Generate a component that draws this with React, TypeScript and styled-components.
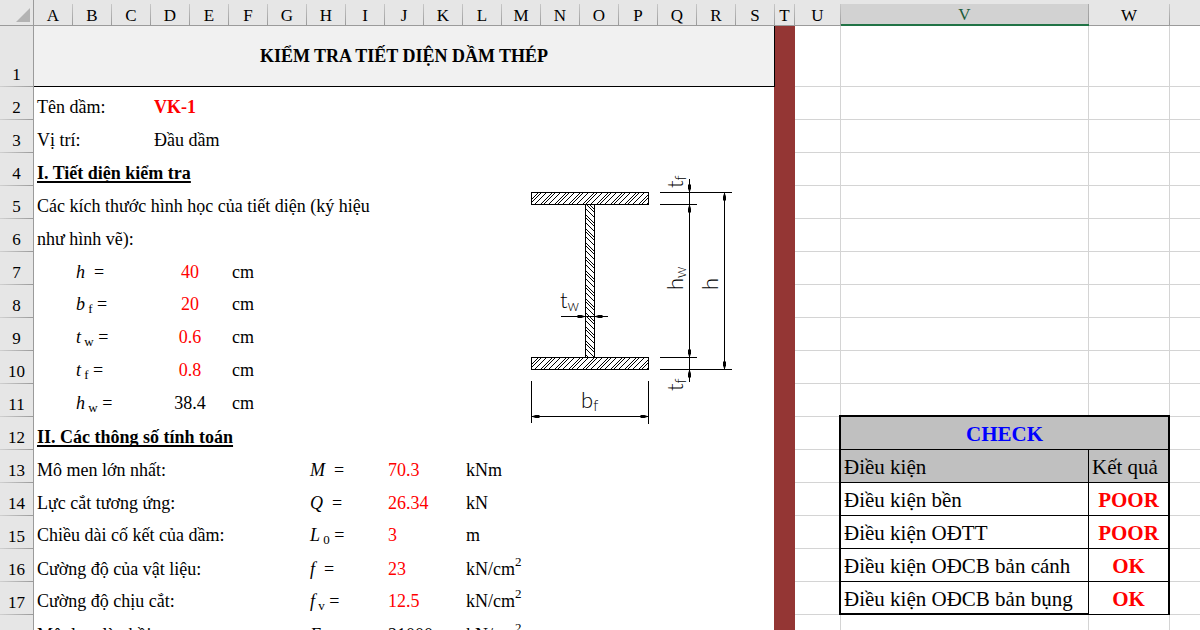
import React from "react";
import styled, { createGlobalStyle, css } from "styled-components";

const GRID = "#d4d4d4";
const RULE = "#9b9b9b";
const HEAD = "#e6e6e6";
const BRICK = "#943634";

const GlobalStyle = createGlobalStyle`
  * { box-sizing: border-box; }
  body { margin: 0; background: #fff; }
`;

const Sheet = styled.main`
  height: 100vh;
  overflow: hidden;
  font-family: "Liberation Serif", "Times New Roman", serif;
  font-size: 18px;
  line-height: 20px;
  color: #000;
`;

const Grid = styled.table`
  width: 100%;
  table-layout: fixed;
  border-collapse: separate;
  border-spacing: 0;
`;

const Col = styled.col<{ $w?: number }>`
  width: ${(p) => (p.$w ? `${p.$w}px` : "auto")};
`;

const Row = styled.tr<{ $h?: number }>`
  height: ${(p) => p.$h ?? 33}px;
`;

const Corner = styled.td`
  height: 26px;
  padding: 0 3px 3px 0;
  text-align: right;
  vertical-align: bottom;
  line-height: 0;
  background: ${HEAD};
  border-right: 1px solid ${RULE};
  border-bottom: 1px solid ${RULE};
`;

const ColumnHead = styled.th<{ $active?: boolean; $last?: boolean }>`
  height: 26px;
  padding: 6px 1px 0 0;
  font-size: 17px;
  font-weight: 400;
  line-height: 18px;
  border-bottom: 1px solid ${RULE};
  background:
    linear-gradient(${HEAD}, ${HEAD}) 0 0 / 100% 4px no-repeat,
    ${(p) => (p.$last ? "" : `linear-gradient(#d0d0d0, ${RULE}) 100% 0 / 1px 100% no-repeat,`)}
    ${HEAD};
  ${(p) =>
    p.$active &&
    css`
      color: #1e5c3c;
      border-bottom: 2px solid #217346;
      background:
        linear-gradient(${HEAD}, ${HEAD}) 0 0 / 100% 4px no-repeat,
        linear-gradient(#b0b0b0, ${RULE}) 100% 0 / 1px 100% no-repeat,
        #d2d2d2;
    `}
`;

const RowHead = styled.th`
  padding: 0 0 3px;
  font-size: 17px;
  font-weight: 400;
  line-height: 18px;
  vertical-align: bottom;
  border-right: 1px solid ${RULE};
  background:
    linear-gradient(90deg, #d0d0d0, ${RULE}) 0 100% / 100% 1px no-repeat,
    ${HEAD};
`;

const Title = styled.td`
  padding: 0;
  font-weight: 700;
  text-align: center;
  vertical-align: middle;
  background: #f1f1f1;
  border-right: 1px solid #000;
  border-bottom: 1px solid #000;
`;

type CellProps = { $end?: boolean; $raised?: boolean; $center?: boolean; $input?: boolean; $bold?: boolean };

const Cell = styled.td<CellProps>`
  padding: 0 0 ${(p) => (p.$raised ? 4 : 3)}px 3px;
  vertical-align: bottom;
  white-space: nowrap;
  ${(p) => p.$center && "text-align: center; padding-left: 0;"}
  ${(p) => p.$input && "color: #f00;"}
  ${(p) => p.$bold && "font-weight: 700;"}
  ${(p) => p.$end && `border-right: 1px solid ${BRICK};`}
`;

const SectionCell = styled(Cell)`
  font-weight: 700;
  text-decoration: underline 2px;
  text-underline-offset: 2px;
  text-decoration-skip-ink: none;
`;

const DrawingCell = styled.td`
  padding: 15px 0 0 22px;
  vertical-align: top;
  border-right: 1px solid ${BRICK};
`;

const Drawing = styled.svg`
  display: block;
`;

const Divider = styled.td`
  padding: 0;
  background: ${BRICK};
`;

type Edge = "right" | "bottom" | "corner";

const line = (color: string, place: string, size: string) =>
  `linear-gradient(${color}, ${color}) ${place} / ${size} no-repeat`;

const edges: Record<Edge | "plain" | "open", string> = {
  plain: [line(GRID, "100% 0", "1px 100%"), line(GRID, "0 100%", "100% 1px")].join(),
  open: line(GRID, "0 100%", "100% 1px"),
  right: [line("#000", "100% 0", "2px 100%"), line(GRID, "0 100%", "100% 1px")].join(),
  bottom: [line("#000", "0 100%", "100% 2px"), line(GRID, "100% 0", "1px 100%")].join(),
  corner: [
    line("#000", "100% 100%", "2px 2px"),
    line(GRID, "100% 0", "1px 100%"),
    line(GRID, "0 100%", "100% 1px"),
  ].join(),
};

const Blank = styled.td<{ $edge?: Edge; $open?: boolean }>`
  padding: 0;
  background: ${(p) => edges[p.$open ? "open" : p.$edge ?? "plain"]};
`;

const Check = styled.td<{ $shade?: boolean; $outer?: boolean; $thick?: boolean; $center?: boolean; $tone?: string }>`
  padding: 2px 3px 0;
  font-size: 21px;
  line-height: 24px;
  vertical-align: middle;
  white-space: nowrap;
  background: ${(p) => (p.$shade ? "#c0c0c0" : "#fff")};
  border-right: ${(p) => (p.$outer ? 2 : 1)}px solid #000;
  border-bottom: ${(p) => (p.$thick ? 2 : 1)}px solid #000;
  ${(p) => p.$center && "text-align: center;"}
  ${(p) => p.$tone && `color: ${p.$tone}; font-weight: 700;`}
`;

const Var = styled.i``;

const Sub = styled.sub`
  font-size: 13px;
  line-height: 0;
  vertical-align: -3px;
`;

const Sup = styled.sup`
  font-size: 13px;
  line-height: 0;
  vertical-align: 9px;
`;

const letters = "ABCDEFGHIJKLMNOPQRSTUVW".split("");

const Formula = ({ name, sub }: { name: string; sub?: string }) => (
  <>
    <Var>{name}</Var>
    {sub ? <Sub>&nbsp;{sub}</Sub> : "\u00a0"}
    {"\u00a0="}
  </>
);

const KNcm2 = () => (
  <>
    kN/cm<Sup>2</Sup>
  </>
);

const Arrow = ({ x, y, turn }: { x: number; y: number; turn: number }) => (
  <path d="M0 0L-1.5 4V8H1.5V4Z" transform={`translate(${x} ${y}) rotate(${turn})`} />
);

/* Hatching: a pair of strokes followed by a single one, repeated. */
const hatchSteps = (from: number, to: number) => {
  const steps: number[] = [];
  for (let at = from; at < to; at += 14) steps.push(at, at + 6, at + 9);
  return steps;
};

const flangeHatch = (bottom: number) =>
  hatchSteps(520, 650)
    .map((x) => `M${x} ${bottom}l12 -12`)
    .join("");

const webHatch = hatchSteps(194, 358)
  .map((y) => `M585 ${y}l10 10`)
  .join("");

const BeamSection = () => (
  <Drawing width="212" height="260" viewBox="524 168 212 260" role="img" aria-label="Tiết diện dầm chữ I">
    <defs>
      <clipPath id="flanges">
        <path d="M532 193H648V204H532ZM532 358H648V369H532Z" />
      </clipPath>
      <clipPath id="web">
        <path d="M586 205H594V357H586Z" />
      </clipPath>
    </defs>
    <g stroke="#000" fill="none">
      <path clipPath="url(#flanges)" d={flangeHatch(205) + flangeHatch(370)} />
      <path clipPath="url(#web)" d={webHatch} />
    </g>
    <g stroke="#000" fill="none" shapeRendering="crispEdges">
      <rect x="531.5" y="192.5" width="117" height="12" />
      <rect x="531.5" y="357.5" width="117" height="12" />
      <rect x="585.5" y="204.5" width="9" height="153" />
      <path d="M660 192.5H732M660 204.5H697M660 357.5H697M660 369.5H732M689.5 179V382M724.5 192V370M561 316.5H608M531.5 381V423M648.5 381V424M531 416.5H649" />
    </g>
    <Arrow x={689.5} y={192.5} turn={180} />
    <Arrow x={689.5} y={204.5} turn={0} />
    <Arrow x={689.5} y={357.5} turn={180} />
    <Arrow x={689.5} y={369.5} turn={0} />
    <Arrow x={724.5} y={192.5} turn={0} />
    <Arrow x={724.5} y={369.5} turn={180} />
    <Arrow x={585.5} y={316.5} turn={90} />
    <Arrow x={594.5} y={316.5} turn={-90} />
    <Arrow x={531.5} y={416.5} turn={-90} />
    <Arrow x={648.5} y={416.5} turn={90} />
    <g fontFamily="Lato, sans-serif" fontWeight="300" fontSize="22">
      <text x="560" y="308">t<tspan fontSize="15" dy="3">w</tspan></text>
      <text x="581" y="408">b<tspan fontSize="15" dy="3">f</tspan></text>
      <text transform="translate(683 188) rotate(-90)">t<tspan fontSize="15" dy="3">f</tspan></text>
      <text transform="translate(683 290) rotate(-90)">h<tspan fontSize="15" dy="3">w</tspan></text>
      <text transform="translate(718 290) rotate(-90)">h</text>
      <text transform="translate(683 391) rotate(-90)">t<tspan fontSize="15" dy="3">f</tspan></text>
    </g>
  </Drawing>
);

const dimensions = [
  { name: "h", value: "40", row: 7 },
  { name: "b", sub: "f", value: "20", row: 8 },
  { name: "t", sub: "w", value: "0.6", row: 9 },
  { name: "t", sub: "f", value: "0.8", row: 10 },
  { name: "h", sub: "w", value: "38.4", row: 11, computed: true },
];

const parameters = [
  { row: 13, label: "Mô men lớn nhất:", name: "M", value: "70.3", unit: "kNm" },
  { row: 14, label: "Lực cắt tương ứng:", name: "Q", value: "26.34", unit: "kN" },
  { row: 15, label: "Chiều dài cố kết của dầm:", name: "L", sub: "0", value: "3", unit: "m", raised: true },
  { row: 16, label: "Cường độ của vật liệu:", name: "f", value: "23", unit: <KNcm2 /> },
  { row: 17, label: "Cường độ chịu cắt:", name: "f", sub: "v", value: "12.5", unit: <KNcm2 />, raised: true },
  { row: 18, label: "Mô đun đàn hồi:", name: "E", value: "21000", unit: <KNcm2 />, computed: true },
];

const checks: Record<number, [string, string]> = {
  14: ["Điều kiện bền", "POOR"],
  15: ["Điều kiện OĐTT", "POOR"],
  16: ["Điều kiện OĐCB bản cánh", "OK"],
  17: ["Điều kiện OĐCB bản bụng", "OK"],
};

const RightSide = ({ row }: { row: number }) => {
  const inTable = row >= 12 && row <= 17;
  const above = row === 11;
  const check = checks[row];
  return (
    <>
      <Divider />
      <Blank $edge={inTable ? "right" : above ? "corner" : undefined} />
      {!inTable && (
        <>
          <Blank $edge={above ? "bottom" : undefined} />
          <Blank $edge={above ? "bottom" : undefined} />
        </>
      )}
      {row === 12 && (
        <Check colSpan={2} $shade $outer $center $tone="#00f">
          CHECK
        </Check>
      )}
      {row === 13 && (
        <>
          <Check $shade>Điều kiện</Check>
          <Check $shade $outer>Kết quả</Check>
        </>
      )}
      {check && (
        <>
          <Check $thick={row === 17}>{check[0]}</Check>
          <Check $outer $center $tone="#f00">{check[1]}</Check>
        </>
      )}
      <Blank $open />
    </>
  );
};

export default function App() {
  return (
    <Sheet>
      <GlobalStyle />
      <Grid>
        <colgroup>
          <Col $w={34} />
          {letters.slice(0, 19).map((l) => (
            <Col key={l} $w={39} />
          ))}
          <Col $w={20} />
          <Col $w={46} />
          <Col $w={248} />
          <Col $w={81} />
          <Col />
        </colgroup>
        <thead>
          <tr>
            <Corner>
              <svg width="14" height="14" viewBox="0 0 14 14" aria-hidden="true">
                <path d="M14 0V14H0Z" fill="#b3b3b3" />
              </svg>
            </Corner>
            {letters.map((l) => (
              <ColumnHead key={l} scope="col" $active={l === "V"}>
                {l}
              </ColumnHead>
            ))}
            <ColumnHead $last />
          </tr>
        </thead>
        <tbody>
          <Row $h={61}>
            <RowHead scope="row">1</RowHead>
            <Title colSpan={19}>KIỂM TRA TIẾT DIỆN DẦM THÉP</Title>
            <RightSide row={1} />
          </Row>
          <Row>
            <RowHead scope="row">2</RowHead>
            <Cell colSpan={3}>Tên dầm:</Cell>
            <Cell colSpan={16} $input $bold $end>VK-1</Cell>
            <RightSide row={2} />
          </Row>
          <Row>
            <RowHead scope="row">3</RowHead>
            <Cell colSpan={3}>Vị trí:</Cell>
            <Cell colSpan={16} $end>Đầu dầm</Cell>
            <RightSide row={3} />
          </Row>
          <Row>
            <RowHead scope="row">4</RowHead>
            <SectionCell colSpan={12}>I. Tiết diện kiểm tra</SectionCell>
            <DrawingCell colSpan={7} rowSpan={9}>
              <BeamSection />
            </DrawingCell>
            <RightSide row={4} />
          </Row>
          <Row>
            <RowHead scope="row">5</RowHead>
            <Cell colSpan={12}>Các kích thước hình học của tiết diện (ký hiệu</Cell>
            <RightSide row={5} />
          </Row>
          <Row>
            <RowHead scope="row">6</RowHead>
            <Cell colSpan={12}>như hình vẽ):</Cell>
            <RightSide row={6} />
          </Row>
          {dimensions.map((d) => (
            <Row key={d.row}>
              <RowHead scope="row">{d.row}</RowHead>
              <Cell />
              <Cell colSpan={2} $raised={d.row > 7}>
                <Formula name={d.name} sub={d.sub} />
              </Cell>
              <Cell colSpan={2} $center $input={!d.computed} $raised={d.row > 7}>{d.value}</Cell>
              <Cell colSpan={7} $raised={d.row > 7}>cm</Cell>
              <RightSide row={d.row} />
            </Row>
          ))}
          <Row>
            <RowHead scope="row">12</RowHead>
            <SectionCell colSpan={12}>II. Các thông số tính toán</SectionCell>
            <RightSide row={12} />
          </Row>
          {parameters.map((p) => (
            <Row key={p.row}>
              <RowHead scope="row">{p.row}</RowHead>
              <Cell colSpan={7} $raised={p.raised}>{p.label}</Cell>
              <Cell colSpan={2} $raised={p.raised}>
                <Formula name={p.name} sub={p.sub} />
              </Cell>
              <Cell colSpan={2} $input={!p.computed} $raised={p.raised}>{p.value}</Cell>
              <Cell colSpan={8} $raised={p.raised} $end>{p.unit}</Cell>
              <RightSide row={p.row} />
            </Row>
          ))}
        </tbody>
      </Grid>
    </Sheet>
  );
}
